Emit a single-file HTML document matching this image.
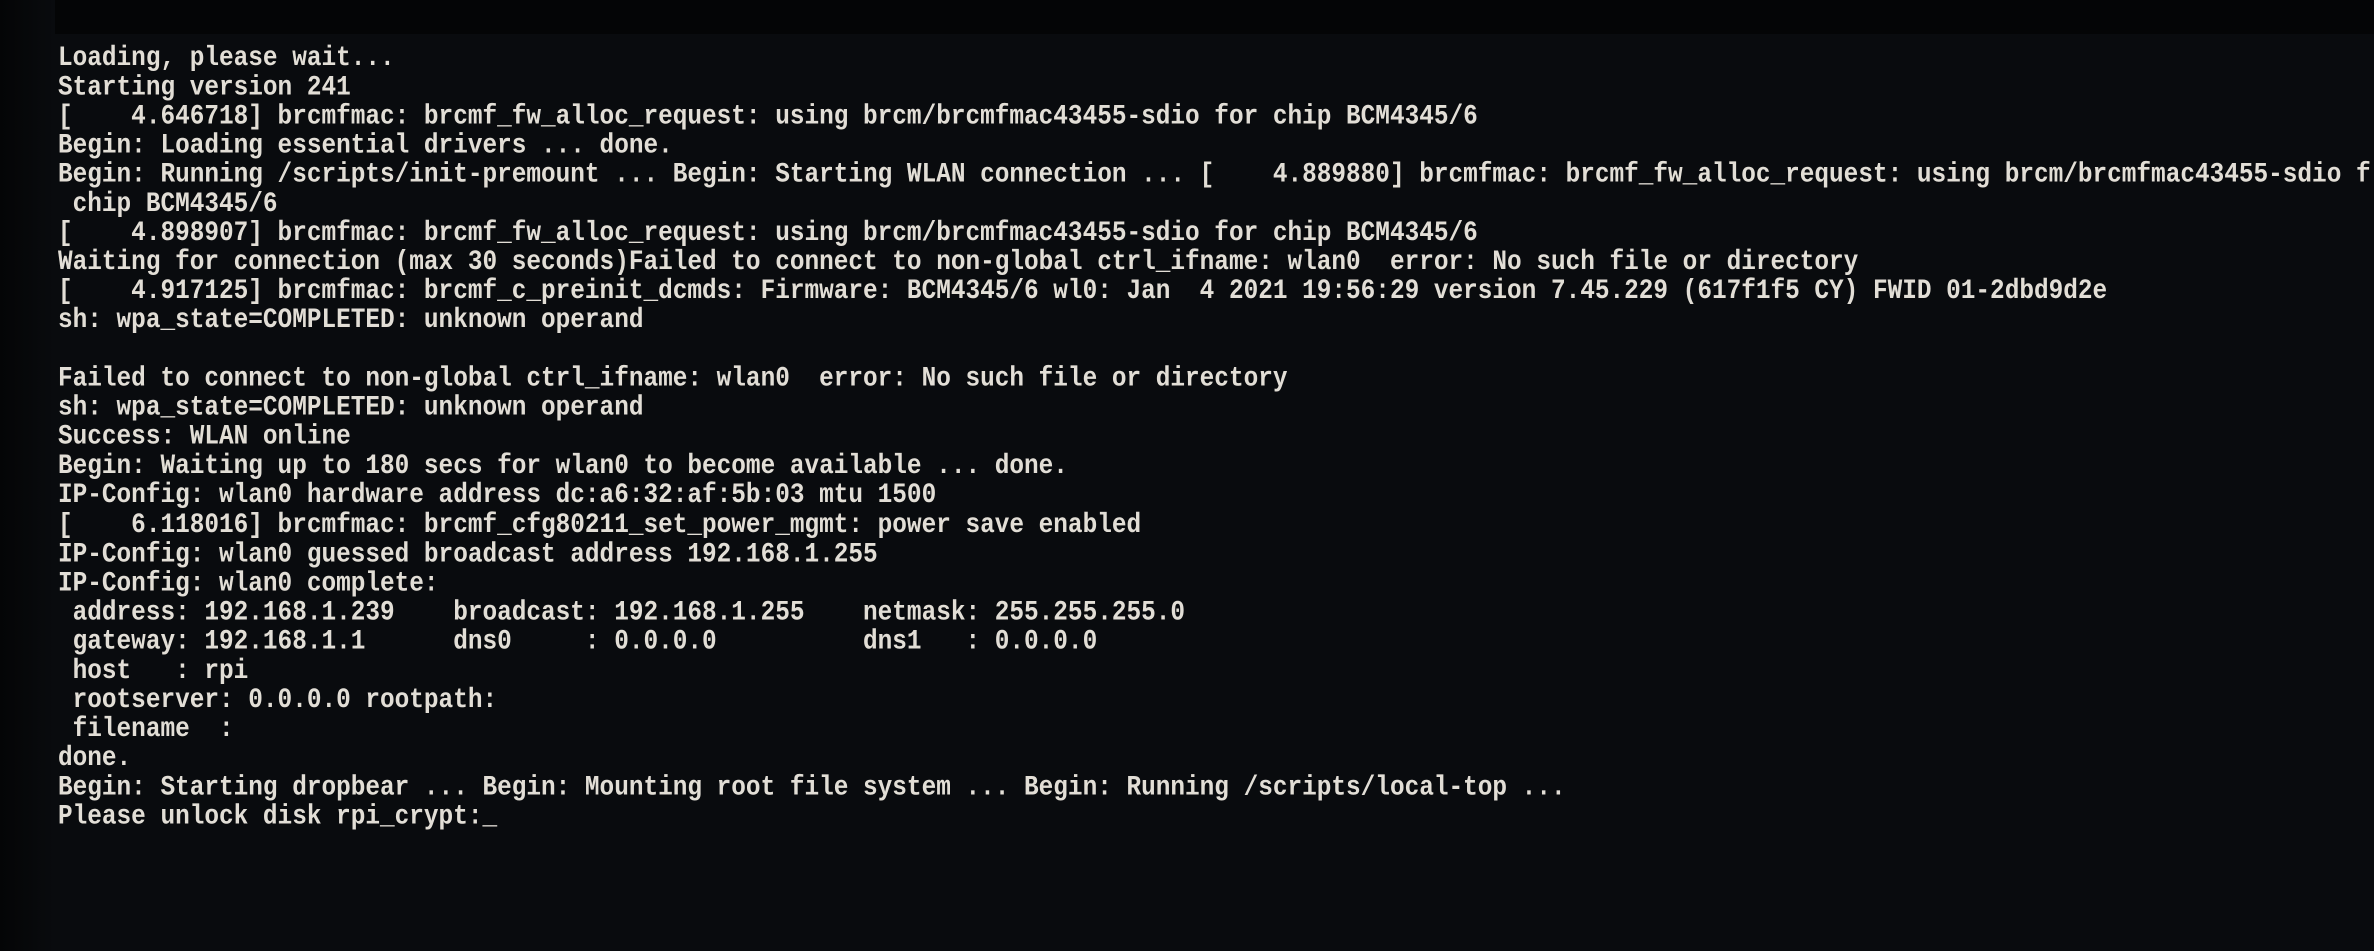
<!DOCTYPE html>
<html><head><meta charset="utf-8"><style>
html,body{margin:0;padding:0;}
body{width:2374px;height:951px;overflow:hidden;background:#090b0e;position:relative;}
.top{position:absolute;left:0;top:0;width:2374px;height:34px;background:#040506;}
.left{position:absolute;left:0;top:0;width:55px;height:951px;background:linear-gradient(90deg,#040506,#090b0e);}
pre{position:absolute;left:58px;top:45px;margin:0;font-family:"Liberation Mono",monospace;font-weight:bold;font-size:24.4px;color:#e2ded6;white-space:pre;transform:scaleY(1.12);transform-origin:0 0;line-height:26.03px;}
</style></head><body>
<div class="top"></div><div class="left"></div>
<pre>Loading, please wait...
Starting version 241
[    4.646718] brcmfmac: brcmf_fw_alloc_request: using brcm/brcmfmac43455-sdio for chip BCM4345/6
Begin: Loading essential drivers ... done.
Begin: Running /scripts/init-premount ... Begin: Starting WLAN connection ... [    4.889880] brcmfmac: brcmf_fw_alloc_request: using brcm/brcmfmac43455-sdio f
 chip BCM4345/6
[    4.898907] brcmfmac: brcmf_fw_alloc_request: using brcm/brcmfmac43455-sdio for chip BCM4345/6
Waiting for connection (max 30 seconds)Failed to connect to non-global ctrl_ifname: wlan0  error: No such file or directory
[    4.917125] brcmfmac: brcmf_c_preinit_dcmds: Firmware: BCM4345/6 wl0: Jan  4 2021 19:56:29 version 7.45.229 (617f1f5 CY) FWID 01-2dbd9d2e
sh: wpa_state=COMPLETED: unknown operand

Failed to connect to non-global ctrl_ifname: wlan0  error: No such file or directory
sh: wpa_state=COMPLETED: unknown operand
Success: WLAN online
Begin: Waiting up to 180 secs for wlan0 to become available ... done.
IP-Config: wlan0 hardware address dc:a6:32:af:5b:03 mtu 1500
[    6.118016] brcmfmac: brcmf_cfg80211_set_power_mgmt: power save enabled
IP-Config: wlan0 guessed broadcast address 192.168.1.255
IP-Config: wlan0 complete:
 address: 192.168.1.239    broadcast: 192.168.1.255    netmask: 255.255.255.0
 gateway: 192.168.1.1      dns0     : 0.0.0.0          dns1   : 0.0.0.0
 host   : rpi
 rootserver: 0.0.0.0 rootpath:
 filename  :
done.
Begin: Starting dropbear ... Begin: Mounting root file system ... Begin: Running /scripts/local-top ...
Please unlock disk rpi_crypt:_</pre>
</body></html>
